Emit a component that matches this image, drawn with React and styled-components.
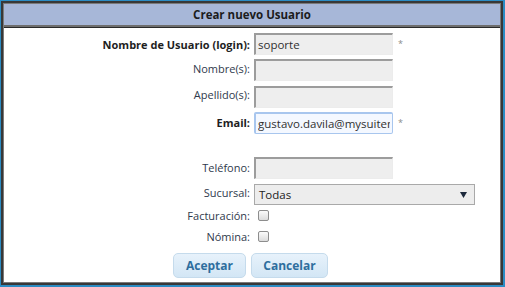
import React from "react";
import styled, { createGlobalStyle } from "styled-components";

const Global = createGlobalStyle`
  html, body { margin: 0; padding: 0; }
  body {
    background: #2b8cc4;
    width: 505px;
    height: 287px;
    overflow: hidden;
    font-family: "Open Sans", "DejaVu Sans", sans-serif;
  }
`;

const Dialog = styled.div`
  margin: 1px 2px 2px 1px;
  width: 502px;
  height: 284px;
  box-sizing: border-box;
  border: 2px solid #383838;
  box-shadow: inset 0 0 0 1px #7a7a7a;
  padding: 1px;
  background: #fff;
  display: flex;
  flex-direction: column;
`;

const Header = styled.div`
  height: 21px;
  background: #a7b7d8;
  border-bottom: 2px solid #6e6e6e;
  display: flex;
  align-items: center;
  justify-content: center;
  font-weight: 700;
  font-size: 11.5px;
  color: #1c1c1c;
`;

const Body = styled.div`
  flex: 1;
  border-top: 1px solid #2a2a2a;
  padding: 5px 0 0 0;
  display: grid;
  grid-template-columns: 246px 1fr;
  column-gap: 4px;
  align-content: start;
`;

const Label = styled.label`
  grid-column: 1;
  text-align: right;
  font-size: 11px;
  font-weight: ${p => (p.$bold ? 700 : 400)};
  color: ${p => (p.$bold ? "#1e1e1e" : "#2f3a4c")};
  align-self: center;
  margin-top: ${p => p.$up || 0}px;
`;

const Field = styled.div`
  grid-column: 2;
  display: flex;
  align-items: center;
  height: ${p => p.$h || 22}px;
  margin-top: ${p => p.$mt || 0}px;
`;

const TextInput = styled.input`
  box-sizing: border-box;
  width: 139px;
  height: 22px;
  margin: 0;
  padding: 0 2px;
  font-family: "Open Sans", "DejaVu Sans", sans-serif;
  font-size: 11.5px;
  color: #303030;
  background: ${p => (p.$focus ? "#f4f8ff" : "#eeeeee")};
  border-style: solid;
  border-width: 2px 1px 1px 2px;
  border-color: ${p =>
    p.$focus ? "#a8c6ee" : "#9c9c9c #ececec #ececec #9c9c9c"};
  border-radius: ${p => (p.$focus ? "2px" : "0")};
  outline: none;
`;

const Star = styled.span`
  font-size: 9px;
  color: #8a8a8a;
  margin-left: 5px;
  align-self: flex-start;
  margin-top: 4px;
`;

const Select = styled.div`
  box-sizing: border-box;
  width: 221px;
  height: 21px;
  border: 1px solid #a9a9a9;
  background: #ededed;
  display: flex;
  align-items: center;
  justify-content: space-between;
  padding: 0 7px 0 4px;
  font-size: 11.5px;
  color: #222;
`;

const Check = styled.span`
  display: inline-block;
  box-sizing: border-box;
  width: 11px;
  height: 11px;
  margin-left: 4px;
  border: 1px solid #8d8d8d;
  border-radius: 2px;
  background: linear-gradient(#fbfbfb, #dcdcdc);
`;

const Buttons = styled.div`
  grid-column: 1 / -1;
  display: flex;
  justify-content: center;
  gap: 5px;
  margin-top: 6px;
  padding-right: 3px;
`;

const Button = styled.button`
  box-sizing: border-box;
  height: 25px;
  width: ${p => p.$w}px;
  border: 1px solid #c5dbec;
  border-radius: 5px;
  background: linear-gradient(#e7f2fb, #d3e6f5);
  color: #2e6e9e;
  font-family: "Open Sans", "DejaVu Sans", sans-serif;
  font-weight: 700;
  font-size: 12px;
  padding: 0;
`;

export default function App() {
  return (
    <>
      <Global />
      <Dialog>
        <Header>Crear nuevo Usuario</Header>
        <Body>
          <Label $bold>Nombre de Usuario (login):</Label>
          <Field>
            <TextInput defaultValue="soporte" />
            <Star>*</Star>
          </Field>

          <Label>Nombre(s):</Label>
          <Field $mt={4}><TextInput /></Field>

          <Label>Apellido(s):</Label>
          <Field $mt={5}><TextInput /></Field>

          <Label $bold $up={2}>Email:</Label>
          <Field $mt={4}>
            <TextInput $focus defaultValue="gustavo.davila@mysuitemex.com" />
            <Star>*</Star>
          </Field>

          <Label $up={22}>Teléfono:</Label>
          <Field $mt={23}><TextInput /></Field>

          <Label>Sucursal:</Label>
          <Field $mt={5} $h={21}>
            <Select>
              <span>Todas</span>
              <svg width="7" height="6" viewBox="0 0 7 6">
                <path d="M0 0 H7 L3.5 6 Z" fill="#1d2a3c" />
              </svg>
            </Select>
          </Field>

          <Label>Facturación:</Label>
          <Field $h={21}><Check /></Field>

          <Label>Nómina:</Label>
          <Field $h={21}><Check /></Field>

          <Buttons>
            <Button $w={73}>Aceptar</Button>
            <Button $w={77}>Cancelar</Button>
          </Buttons>
        </Body>
      </Dialog>
    </>
  );
}
